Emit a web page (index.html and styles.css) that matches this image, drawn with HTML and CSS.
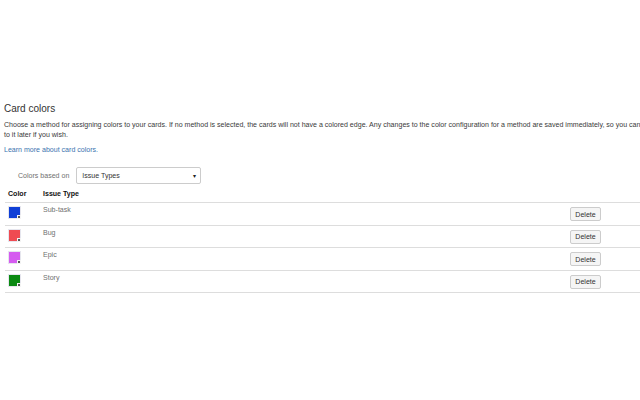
FILE: index.html
```html
<!DOCTYPE html>
<html>
<head>
<meta charset="utf-8">
<link rel="stylesheet" href="styles.css">
</head>
<body>
<div class="page">
  <h2 class="title">Card colors</h2>
  <p class="desc">Choose a method for assigning colors to your cards. If no method is selected, the cards will not have a colored edge. Any changes to the color configuration for a method are saved immediately, so you can switch to a different method and come back to it later if you wish.</p>
  <a class="learn" href="#">Learn more about card colors.</a>
  <div class="method">
    <span class="method-label">Colors based on</span>
    <div class="select"><span>Issue Types</span><span class="arrow">&#9662;</span></div>
  </div>
  <div class="table">
    <div class="row head"><div class="c1">Color</div><div class="c2">Issue Type</div><div class="c3"></div></div>
    <div class="row"><div class="c1"><span class="swatch sw-blue"></span></div><div class="c2">Sub-task</div><div class="c3"><span class="btn">Delete</span></div></div>
    <div class="row"><div class="c1"><span class="swatch sw-red"></span></div><div class="c2">Bug</div><div class="c3"><span class="btn">Delete</span></div></div>
    <div class="row"><div class="c1"><span class="swatch sw-purple"></span></div><div class="c2">Epic</div><div class="c3"><span class="btn">Delete</span></div></div>
    <div class="row"><div class="c1"><span class="swatch sw-green"></span></div><div class="c2">Story</div><div class="c3"><span class="btn">Delete</span></div></div>
  </div>
</div>
</body>
</html>
```
FILE: styles.css
```css
html, body {
  margin: 0;
  padding: 0;
  overflow: hidden;
  background: #fff;
}
body {
  font-family: "Liberation Sans", Arial, sans-serif;
  color: #333;
  width: 640px;
  height: 400px;
}
.page {
  padding: 103px 0 0 4px;
  width: 900px;
}
.title {
  margin: 0;
  font-size: 10px;
  line-height: 12px;
  font-weight: normal;
  color: #333;
}
.desc {
  margin: 5px 0 0 0;
  font-size: 7.05px;
  line-height: 9.5px;
  color: #3a3a3a;
  width: 776px;
}
.learn {
  display: block;
  margin-top: 6px;
  font-size: 7.05px;
  line-height: 10px;
  color: #3b73af;
  text-decoration: none;
}
.method {
  display: flex;
  align-items: center;
  margin-top: 12px;
  padding-left: 14px;
  gap: 7px;
}
.method-label {
  font-size: 7.05px;
  color: #707070;
}
.select {
  box-sizing: border-box;
  width: 125px;
  height: 17px;
  border: 1px solid #ccc;
  border-radius: 2px;
  display: flex;
  align-items: center;
  justify-content: space-between;
  padding: 0 4px 0 5px;
  font-size: 7.05px;
  color: #333;
}
.arrow {
  font-size: 6px;
  color: #222;
}
.table {
  margin: 1px 0 0 1px;
  width: 720px;
}
.row {
  display: grid;
  grid-template-columns: 35px 527px auto;
  box-sizing: border-box;
  height: 22.5px;
  border-top: 1px solid #ddd;
  font-size: 7.05px;
  color: #707070;
}
.row:last-child {
  border-bottom: 1px solid #ddd;
  height: 23.5px;
}
.row.head {
  border-top: none;
  height: 17px;
  color: #111;
  font-weight: bold;
  align-items: center;
}
.row .c1 {
  padding: 3px 0 0 4px;
}
.row .c2 {
  padding: 3px 0 0 3px;
}
.row.head .c1, .row.head .c2 {
  padding-top: 0;
}
.row.head .c1 { padding-left: 3px; }
.c3 {
  padding: 4px 0 0 3px;
}
.swatch {
  position: relative;
  display: block;
  width: 11px;
  height: 11px;
  margin-top: 1px;
  box-shadow: 0 0 0 1px #e6e6ee;
}
.swatch::after {
  content: "";
  position: absolute;
  right: -1px;
  bottom: -1px;
  width: 2px;
  height: 2px;
  background: #555;
  border: 1px solid #f4f4f4;
}
.sw-blue { background: #0f3fd6; }
.sw-red { background: #ef4b52; }
.sw-purple { background: #d55bf0; }
.sw-green { background: #0b8a12; }
.btn {
  display: inline-flex;
  align-items: center;
  justify-content: center;
  box-sizing: border-box;
  width: 31px;
  height: 14px;
  border: 1px solid #ccc;
  border-radius: 2px;
  background: #f5f5f5;
  color: #333;
  font-size: 7.05px;
}
```
